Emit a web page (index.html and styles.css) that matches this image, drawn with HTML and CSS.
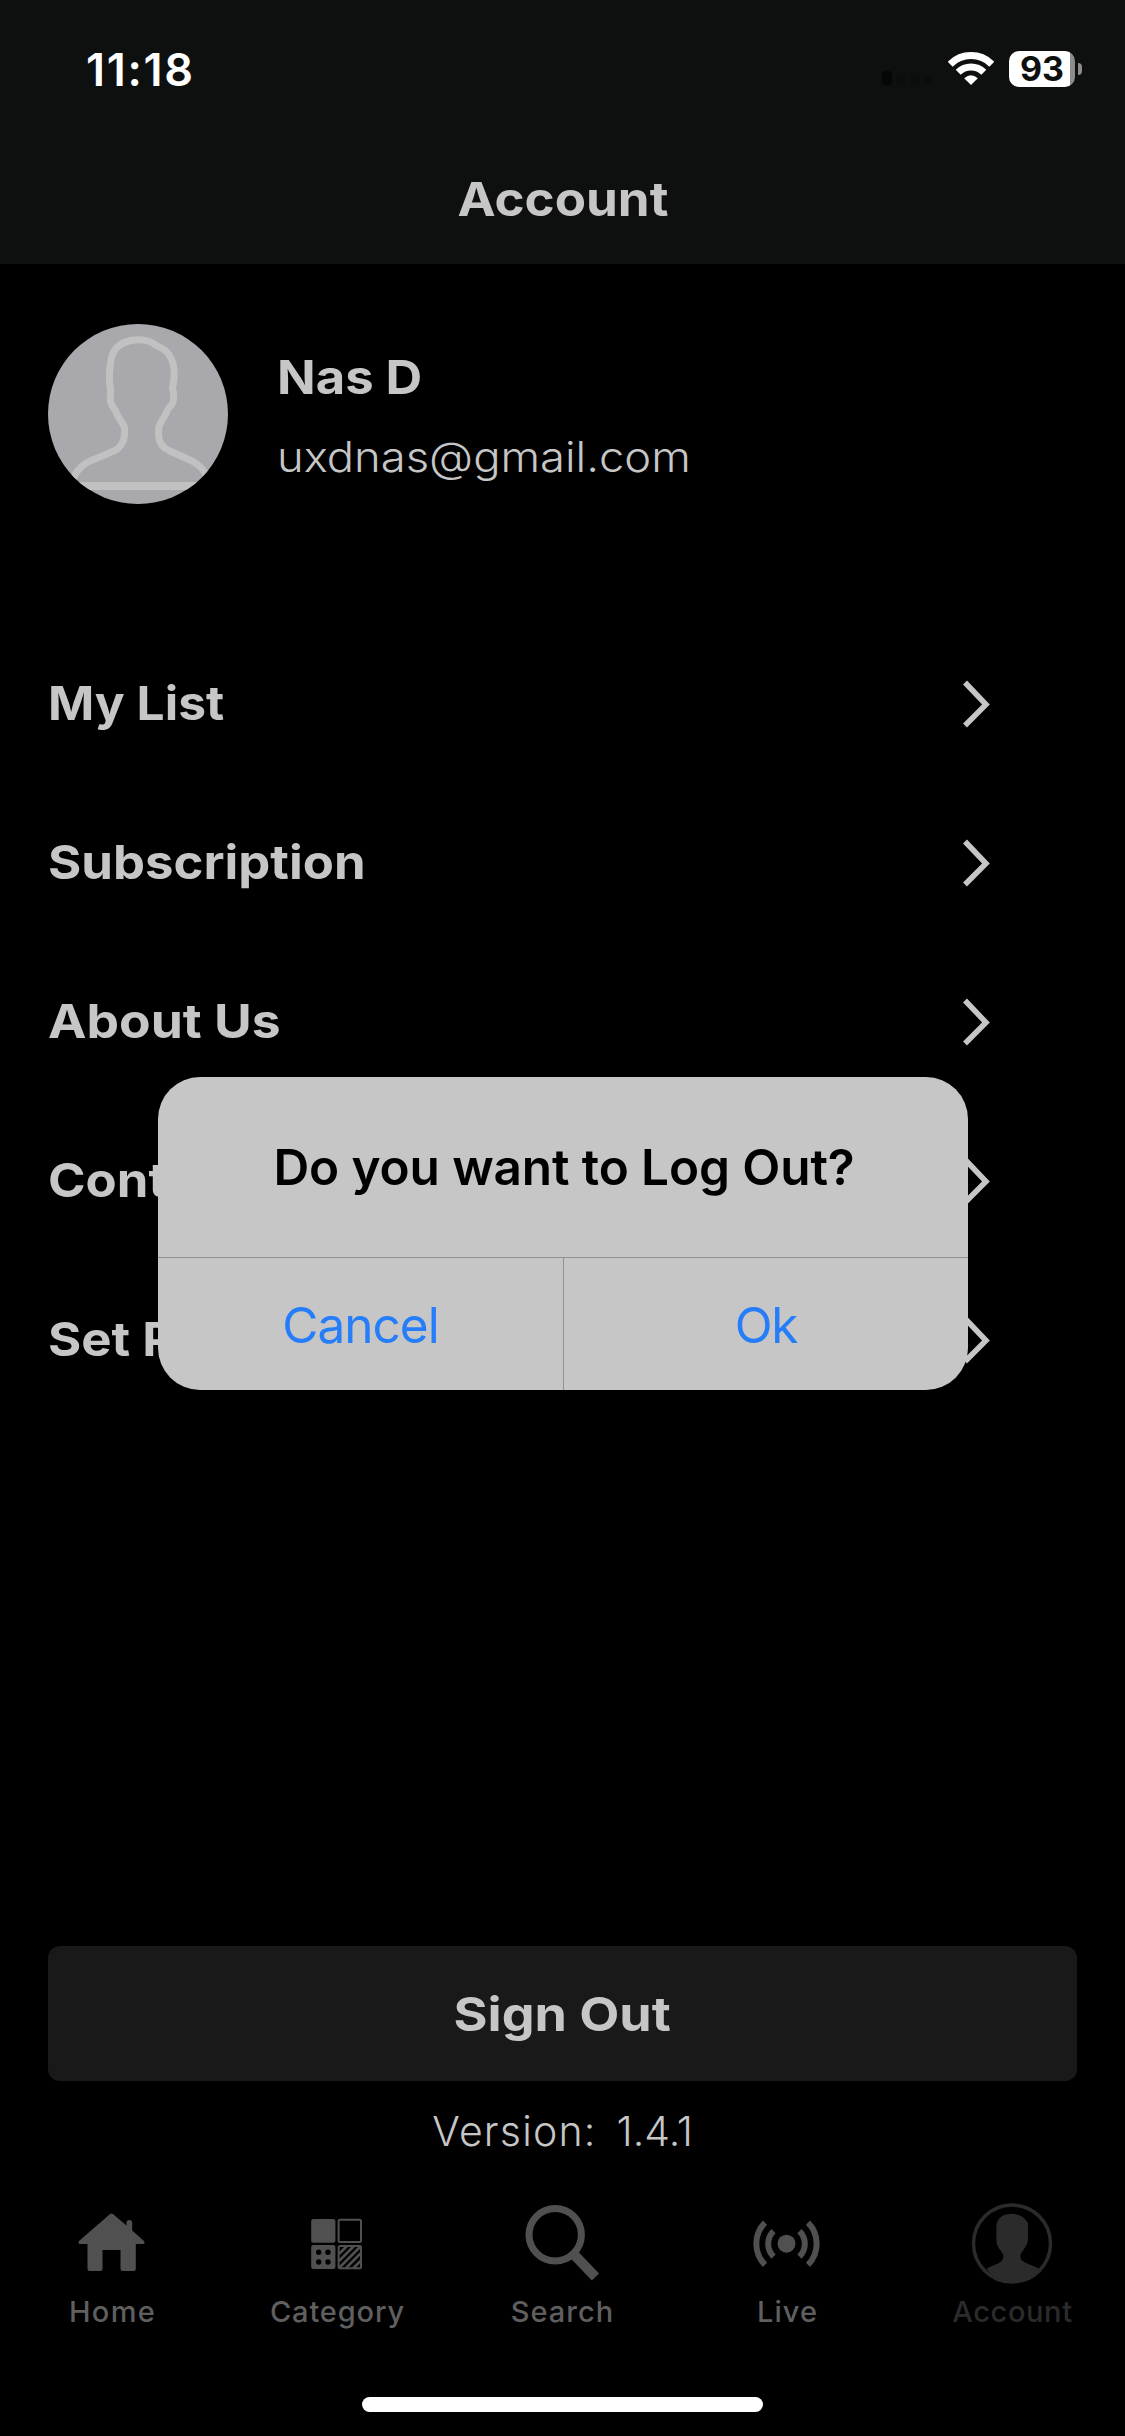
FILE: index.html
```html
<!DOCTYPE html>
<html lang="en">
<head>
<meta charset="utf-8">
<title>Account</title>
<link rel="stylesheet" href="styles.css">
</head>
<body>
<div class="screen">
  <header class="header">
    <div class="status-bar">
      <span class="time">11:18</span>
      <div class="status-icons">
        <svg class="signal" width="52" height="36" viewBox="0 0 52 36" fill="#0b0c0c"><rect x="0" y="20" width="10" height="14" rx="4" fill="#050606"/><rect x="15" y="25" width="8" height="8" rx="3"/><rect x="29" y="25" width="8" height="8" rx="3"/><rect x="42" y="25" width="8" height="8" rx="3"/></svg>
        <svg class="wifi" width="46" height="34" viewBox="0 0 46 34" fill="none" stroke="#fff" stroke-width="7"><path d="M2.2 12.2A29.5 29.5 0 0 1 43.8 12.2"/><path d="M10.2 20.2A18.2 18.2 0 0 1 35.8 20.2"/><path d="M16.2 26.2Q23 20.2 29.8 26.2L23 33Z" fill="#fff" stroke="none"/></svg>
        <div class="battery"><span class="battery-level">93</span></div>
        <span class="battery-cap"></span>
      </div>
    </div>
    <h1 class="title"><span class="wide wide-title">Account</span></h1>
  </header>

  <section class="profile">
    <svg class="avatar" width="180" height="180" viewBox="0 0 180 180">
      <g fill="none" stroke="#c1c1c2" stroke-width="7" stroke-linejoin="round">
        <path d="M24 158C28 145 38 138 47 135L67 126.500C74 122 76.500 117 76.600 110V104C75 98 69.500 94 67.700 87C65 83 62 80 62.400 75C62 71 63 68 62.400 64C61 57 61.500 45 63 36C65 24 73 18.500 83 16.500C94 14.500 103 17 109 22C115 24 120 28 123 34C127 42 127 53 124.500 64C125.500 68 126 74 125 78C124 82 121 82 119 87C117 94 112 97 110.600 104V112C111 119 115 124 122 127L142 136C151 140 156 145 160 155"/>
        <path d="M20 162H160" stroke-width="8"/>
      </g>
    </svg>
    <div class="identity">
      <div class="name"><span class="wide wide-name">Nas D</span></div>
      <div class="email"><span class="wide wide-name">uxdnas@gmail.com</span></div>
    </div>
  </section>

  <nav class="menu">
    <div class="menu-item"><span class="wide wide-list">My List</span><svg class="chevron" width="28" height="50" viewBox="0 0 28 50"><path d="M3 4.500L24 26.500L3 47.500"/></svg></div>
    <div class="menu-item"><span class="wide wide-item">Subscription</span><svg class="chevron" width="28" height="50" viewBox="0 0 28 50"><path d="M3 4.500L24 26.500L3 47.500"/></svg></div>
    <div class="menu-item"><span class="wide wide-about">About Us</span><svg class="chevron" width="28" height="50" viewBox="0 0 28 50"><path d="M3 4.500L24 26.500L3 47.500"/></svg></div>
    <div class="menu-item"><span class="wide wide-item">Cont</span><svg class="chevron" width="28" height="50" viewBox="0 0 28 50"><path d="M3 4.500L24 26.500L3 47.500"/></svg></div>
    <div class="menu-item"><span class="wide wide-item">Set P</span><svg class="chevron" width="28" height="50" viewBox="0 0 28 50"><path d="M3 4.500L24 26.500L3 47.500"/></svg></div>
  </nav>

  <div class="sign-out"><span class="wide wide-button">Sign Out</span></div>
  <div class="version"><span class="version-label">Version:</span><span class="version-number">1.4.1</span></div>

  <nav class="tabs">
    <div class="tab">
      <svg width="84" height="84" viewBox="0 0 84 84" fill="#505050"><path d="M39.800 12.200Q41.500 10.800 43.200 12.200L56.500 23.500V20.500Q56.500 18 59.300 18T62.200 20.500V28.500L74 39Q75.500 42 73 42H65.800V66.500Q65.800 69 63.300 69H53Q50.500 69 50.500 66.500V48H32.500V66.500Q32.500 69 30 69H20Q17.500 69 17.500 66.500V42H10Q7.500 42 9 39Z"/></svg>
      <span class="home">Home</span>
    </div>
    <div class="tab">
      <svg width="84" height="84" viewBox="0 0 84 84" fill="#505050">
        <rect x="16.200" y="17" width="24.200" height="23.800" rx="2"/>
        <rect x="43.600" y="17.800" width="22.400" height="22.200" rx="1.500" fill="none" stroke="#505050" stroke-width="2"/>
        <rect x="16.200" y="43" width="24.200" height="24" rx="2"/>
        <g fill="#000"><circle cx="23.700" cy="50.300" r="2.700"/><circle cx="33" cy="50.300" r="2.700"/><circle cx="23.700" cy="60" r="2.700"/><circle cx="33" cy="60" r="2.700"/></g>
        <rect x="43.600" y="44" width="22.400" height="22.200" rx="1.500" fill="none" stroke="#505050" stroke-width="2"/>
        <path d="M44 52L52 44M44 59L59 44M44 66L66 44M51 66L66 51M58.500 66L66 58.500" stroke="#505050" stroke-width="2.600"/>
      </svg>
      <span class="category">Category</span>
    </div>
    <div class="tab">
      <svg width="84" height="84" viewBox="0 0 84 84" fill="none" stroke="#505050"><circle cx="35.200" cy="32.700" r="26.200" stroke-width="7"/><path d="M53 51.500L75.500 75" stroke-width="10"/></svg>
      <span class="search">Search</span>
    </div>
    <div class="tab">
      <svg width="84" height="84" viewBox="0 0 84 84" fill="none" stroke="#505050" stroke-width="6"><circle cx="41.500" cy="41.700" r="9" fill="#505050" stroke="none"/><path d="M28.500 29A18 18 0 0 0 28.500 54.500M54.500 29A18 18 0 0 1 54.500 54.500M20 20.600A30 30 0 0 0 20 62.800M63 20.600A30 30 0 0 1 63 62.800"/></svg>
      <span class="live">Live</span>
    </div>
    <div class="tab tab-active">
      <svg width="84" height="84" viewBox="0 0 84 84" fill="#2b2b2b"><circle cx="42" cy="41.500" r="38.500" fill="none" stroke="#2b2b2b" stroke-width="3.500"/><path d="M16.500 66.500L29 61Q33.500 58.500 33.500 53.500C31 48 27 45 26.700 41C26 35 26.500 29 26.500 23C27.500 15 34 11.700 41.500 11.700C47 11.700 54 14 58 21V36C58.500 44 52 48 50.200 54Q50.500 58.500 55 60.500L69 66.500Q58 80 42 80T16.500 66.500Z"/></svg>
      <span class="account">Account</span>
    </div>
  </nav>
  <div class="home-indicator"></div>

  <div class="dialog">
    <div class="dialog-title">Do you want to Log Out?</div>
    <div class="dialog-actions">
      <div class="action cancel">Cancel</div>
      <div class="action ok">Ok</div>
    </div>
  </div>
</div>
</body>
</html>
```

FILE: styles.css
```css
* { box-sizing: border-box; }
body { margin: 0; background: #000; font-family: Inter, "Liberation Sans", sans-serif; color: #c6c6c6; }
svg { display: block; flex: none; }
.screen { position: relative; width: 1125px; height: 2436px; display: flex; flex-direction: column; overflow: hidden; white-space: nowrap; }

.wide { display: inline-block; transform-origin: left center; }
.wide-title { transform: scaleX(1.088); transform-origin: center; }
.wide-name { transform: scaleX(1.08); }
.wide-list { transform: scaleX(1.058); }
.wide-item { transform: scaleX(1.082); }
.wide-about { transform: scaleX(1.098); }
.wide-button { transform: scaleX(1.107); transform-origin: center; }

.header { height: 264px; background: #0e100f; flex: none; }
.status-bar { height: 138px; padding: 0 43px 0 86px; display: flex; align-items: center; justify-content: space-between; color: #fff; }
.time { font-size: 45px; font-weight: 600; letter-spacing: 1.7px; }
.status-icons { display: flex; align-items: center; }
.wifi { margin: 0 15px 0 14px; }
.battery { width: 66px; height: 36px; border-radius: 10px; background: linear-gradient(90deg, #fff 61px, #8b8c8b 61px); display: flex; align-items: center; padding-left: 11px; }
.battery-level { font-size: 34px; font-weight: 700; line-height: 36px; color: #0e100f; }
.battery-cap { width: 4px; height: 12px; margin-left: 3px; border-radius: 0 6px 6px 0; background: #8b8c8b; }
.title { margin: 0; height: 122px; line-height: 122px; text-align: center; font-size: 47px; font-weight: 700; }

.profile { display: flex; align-items: flex-start; gap: 49px; padding: 60px 48px 0; height: 359px; flex: none; }
.avatar { border-radius: 50%; background: #a9a8ac; }
.identity { padding-top: 13px; line-height: 80px; }
.name { font-size: 47px; font-weight: 700; }
.email { font-size: 42px; font-weight: 300; }

.menu { padding: 0 135px 0 48px; }
.menu-item { height: 159px; display: flex; align-items: center; justify-content: space-between; font-size: 47px; font-weight: 700; }
.chevron path { fill: none; stroke: #c6c6c6; stroke-width: 5.5; }

.sign-out { margin: auto 48px 0; height: 135px; flex: none; line-height: 135px; border-radius: 12px; background: #191919; text-align: center; font-size: 47px; font-weight: 700; }
.version { display: flex; justify-content: center; gap: 20px; height: 100px; flex: none; line-height: 100px; font-size: 41px; font-weight: 300; }
.version-label { letter-spacing: 1.2px; }

.tabs { margin-top: 21px; display: grid; grid-template-columns: repeat(5, 1fr); height: 195px; flex: none; }
.tab { display: flex; flex-direction: column; align-items: center; font-size: 29px; font-weight: 500; line-height: 52px; color: #5f5f5f; }
.tab svg { margin-left: -1px; }
.tab-active { color: #2b2b2b; }
.home { letter-spacing: 1.3px; }
.category { letter-spacing: .85px; }
.search { letter-spacing: 1px; }
.live { letter-spacing: 1px; }
.account { letter-spacing: .6px; }
.home-indicator { width: 401px; height: 15px; margin: 0 auto 24px; flex: none; border-radius: 8px; background: #fff; }

.dialog { position: absolute; left: 158px; top: 1077px; width: 810px; height: 313px; border-radius: 42px; background: #c6c6c6; overflow: hidden; display: flex; flex-direction: column; text-align: center; }
.dialog-title { height: 180px; line-height: 180px; font-size: 49.5px; font-weight: 600; letter-spacing: -.1px; color: #000; padding-left: 2px; }
.dialog-actions { flex: 1; display: grid; grid-template-columns: 406px 1fr; border-top: 1px solid #929292; }
.action { font-size: 49.5px; line-height: 135px; color: #267dfa; }
.cancel { border-right: 1px solid #929292; letter-spacing: -.95px; }
.ok { letter-spacing: -1.3px; }
```
